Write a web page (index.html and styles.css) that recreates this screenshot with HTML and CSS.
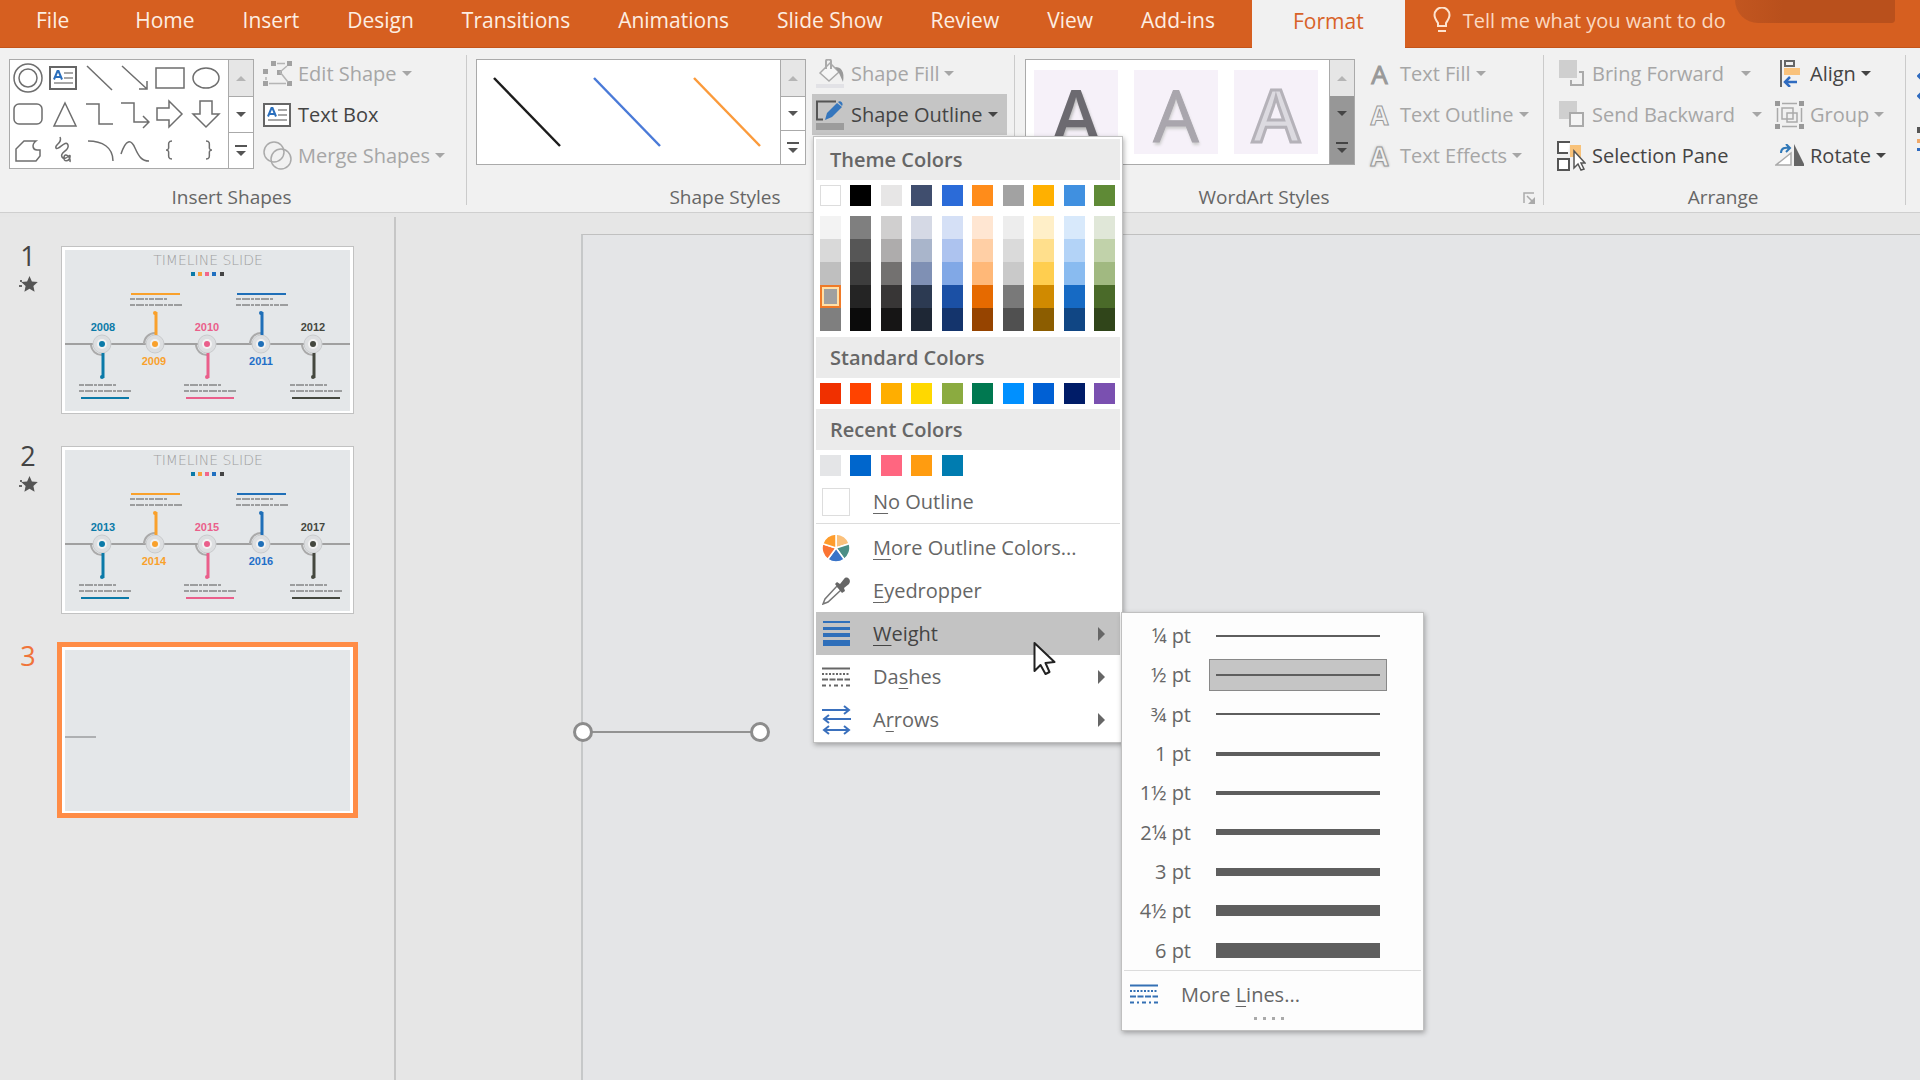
FILE: index.html
```html
<!DOCTYPE html>
<html lang="en">
<head>
<meta charset="utf-8">
<meta name="viewport" content="width=device-width, initial-scale=1">
<title>Timeline Slide</title>
<link rel="stylesheet" href="styles.css">
</head>
<body>
<svg class="defs" aria-hidden="true">
  <defs>
    <symbol id="textbox" viewBox="0 0 28 24">
      <rect x="1" y="1" width="26" height="22" fill="#fff" stroke="#666" stroke-width="2"/>
      <path d="M5 13.500L8.500 5h1L13 13.500M6.500 11h5" fill="none" stroke="#2a6fbd" stroke-width="2"/>
      <path d="M15 7h9M15 12h9M5 17h19" stroke="#8a8a8a" stroke-width="1.500"/>
    </symbol>
    <symbol id="dashes" viewBox="0 0 28 20">
      <g stroke="currentColor" fill="none">
        <path d="M0 1.500h28" stroke-width="2"/>
        <path d="M0 7h28" stroke-width="2" stroke-dasharray="2 1.500"/>
        <path d="M0 12.500h28" stroke-width="2" stroke-dasharray="6 1.500"/>
        <path d="M0 18.500h28" stroke-width="2" stroke-dasharray="4 3 2 3"/>
      </g>
    </symbol>
    <symbol id="star" viewBox="0 0 19 17">
      <path d="M10.500 0l2.400 5.400 5.900.600-4.400 4 1.200 5.800-5.100-3-5.100 3 1.200-5.800-4.400-4 5.900-.600z" fill="#555"/>
      <path d="M1 4h2v2H1zM0 9h3v2H0z" fill="#666"/>
    </symbol>
    <symbol id="node-down" viewBox="0 0 40 60" overflow="visible">
      <circle r="9" fill="#dcdee0" stroke="#c9cbcd"/>
      <path d="M-11 1A11 11 0 0 0 0 11" fill="none" stroke="#aaa" stroke-width="2"/>
      <circle r="5" fill="#f2f2f2"/><circle r="3" fill="currentColor"/>
      <path d="M1 9V34" stroke="currentColor" stroke-width="3"/><circle cx="0" cy="33" r="2" fill="currentColor"/>
      <path d="M-23 41h38M-23 47h52" stroke="#555" stroke-dasharray="5 1 8 1 3 1"/>
      <path d="M-21 54h48" stroke="currentColor" stroke-width="2"/>
    </symbol>
    <symbol id="node-up" viewBox="0 0 40 60" overflow="visible">
      <circle r="9" fill="#dcdee0" stroke="#c9cbcd"/>
      <path d="M-11 0A11 11 0 0 1 0 -11" fill="none" stroke="#aaa" stroke-width="2"/>
      <circle r="5" fill="#f2f2f2"/><circle r="3" fill="currentColor"/>
      <path d="M1 -9V-32" stroke="currentColor" stroke-width="3"/><circle cx="0" cy="-31" r="2" fill="currentColor"/>
      <path d="M-25 -45h38M-25 -39h52" stroke="#555" stroke-dasharray="5 1 8 1 3 1"/>
      <path d="M-24 -50h49" stroke="currentColor" stroke-width="2"/>
    </symbol>
    <symbol id="timeline" viewBox="0 0 285 161">
      <text class="thumb-title" x="143" y="15">TIMELINE SLIDE</text>
      <g>
        <path d="M126 22h4v4h-4z" fill="#0b7aa8"/><path d="M133 22h4v4h-4z" fill="#f9a03a"/><path d="M140 22h4v4h-4z" fill="#f2668b"/><path d="M147 22h4v4h-4z" fill="#1f6fc0"/><path d="M155 22h4v4h-4z" fill="#444"/>
      </g>
      <path d="M0 94h285" stroke="#a0a0a0" stroke-width="2"/>
      <use href="#node-down" x="37" y="94" width="40" height="60" color="#0b7aa8"/>
      <use href="#node-up" x="90" y="94" width="40" height="60" color="#f9a12c"/>
      <use href="#node-down" x="142" y="94" width="40" height="60" color="#ea5f8b"/>
      <use href="#node-up" x="196" y="94" width="40" height="60" color="#1f6fb8"/>
      <use href="#node-down" x="248" y="94" width="40" height="60" color="#45483f"/>
    </symbol>
  </defs>
</svg>

<div class="app">
  <nav class="tabs" aria-label="Ribbon tabs">
    <button class="tab tab-file">File</button>
    <button class="tab">Home</button>
    <button class="tab">Insert</button>
    <button class="tab">Design</button>
    <button class="tab">Transitions</button>
    <button class="tab">Animations</button>
    <button class="tab">Slide Show</button>
    <button class="tab">Review</button>
    <button class="tab">View</button>
    <button class="tab">Add-ins</button>
    <button class="tab tab-active">Format</button>
    <button class="tell">
      <svg width="18" height="26" viewBox="0 0 18 26" fill="none" stroke="#fde3cf" stroke-width="2"><path d="M5 19v-3C3 13 1.500 11 1.500 8a7.500 7.500 0 0 1 15 0c0 3-1.500 5-3.500 8v3zM5 24h8"/></svg>
      Tell me what you want to do
    </button>
    <span class="tabs-art"></span>
  </nav>

  <section class="ribbon" aria-label="Format">
    <div class="group g-insert">
      <div class="group-body">
        <div class="gallery gallery-shapes">
          <div class="shape-grid">
            <button aria-label="Donut"><svg viewBox="0 0 30 30"><circle cx="15" cy="15" r="14"/><circle cx="15" cy="15" r="9"/></svg></button>
            <button aria-label="Text box"><svg viewBox="0 0 30 30"><use href="#textbox" x="1" y="3" width="28" height="24"/></svg></button>
            <button aria-label="Line"><svg viewBox="0 0 30 30"><path d="M3 3l25 24"/></svg></button>
            <button aria-label="Arrow"><svg viewBox="0 0 30 30"><path d="M2 3l25 23M27 18v8h-8"/></svg></button>
            <button aria-label="Rectangle"><svg viewBox="0 0 30 30"><path d="M1 5h28v20H1z"/></svg></button>
            <button aria-label="Ellipse"><svg viewBox="0 0 30 30"><ellipse cx="15" cy="15" rx="13" ry="10"/></svg></button>
            <button aria-label="Rounded rectangle"><svg viewBox="0 0 30 30"><rect x="1" y="5" width="28" height="20" rx="5"/></svg></button>
            <button aria-label="Triangle"><svg viewBox="0 0 30 30"><path d="M17 4L28 27H6z"/></svg></button>
            <button aria-label="Elbow"><svg viewBox="0 0 30 30"><path d="M2 5h13v20h14"/></svg></button>
            <button aria-label="Elbow arrow"><svg viewBox="0 0 30 30"><path d="M1 4h13v19h14M23 17l6 6-6 6"/></svg></button>
            <button aria-label="Right arrow"><svg viewBox="0 0 30 30"><path d="M2 9h12V2l13 13-13 13v-7H2z"/></svg></button>
            <button aria-label="Down arrow"><svg viewBox="0 0 30 30"><path d="M9 2h12v13h7L15 28 2 15h7z"/></svg></button>
            <button aria-label="Freeform"><svg viewBox="0 0 30 30"><path d="M3 26V14l8-8h12c-5 4-3 9 1 9h3v6l-4 5z"/></svg></button>
            <button aria-label="Scribble"><svg viewBox="0 0 30 30"><path d="M12 2c3 6-6 8-4 11s10-9 12-3-9 7-6 12 9-5 8 0-7 5-6 0 7 0 6 5"/></svg></button>
            <button aria-label="Arc"><svg viewBox="0 0 30 30"><path d="M4 6c14 0 25 6 25 20"/></svg></button>
            <button aria-label="Curve"><svg viewBox="0 0 30 30"><path d="M1 19C6 4 11 4 15 13s7 13 14 13"/></svg></button>
            <button aria-label="Left brace"><svg viewBox="0 0 30 30"><path d="M17 6c-7 0 0 9-6 9 6 0-1 9 6 9"/></svg></button>
            <button aria-label="Right brace"><svg viewBox="0 0 30 30"><path d="M15 6c7 0 0 9 6 9-6 0 1 9-6 9"/></svg></button>
          </div>
          <div class="scroller">
            <button class="off" aria-label="Previous"><i class="up"></i></button>
            <button aria-label="Next"><i class="down"></i></button>
            <button aria-label="More"><i class="more"></i></button>
          </div>
        </div>
        <div class="stack">
          <button class="cmd off"><svg class="ico" viewBox="0 0 29 26"><g fill="#a2a2a2"><path d="M8 0h5v5H8zM24 0h5v5h-5zM0 8h5v5H0zM14 9h5v5h-5zM0 20h5v5H0zM24 20h5v5h-5z"/></g><path d="M14 2.500h8M3 16v3M6 22.500h17M24 5l-7 6 8 10" stroke="#b5b5b5" stroke-width="1.500" fill="none"/></svg>Edit Shape<i class="down"></i></button>
          <button class="cmd"><svg class="ico" viewBox="0 0 29 24"><use href="#textbox" x="0" y="0" width="28" height="24"/></svg>Text Box</button>
          <button class="cmd off"><svg class="ico" viewBox="0 0 29 29" fill="none" stroke="#aaa" stroke-width="1.500"><circle cx="11" cy="11" r="10"/><circle cx="18" cy="18" r="10"/></svg>Merge Shapes<i class="down"></i></button>
        </div>
      </div>
      <h2 class="group-label">Insert Shapes</h2>
    </div>
    <div class="sep"></div>

    <div class="group g-styles">
      <div class="group-body">
        <div class="gallery">
          <div class="tiles">
            <button aria-label="Black line"><svg width="84" height="84" viewBox="0 0 84 84"><path d="M9 8l66 68" stroke="#1c1c1c" stroke-width="2.500"/></svg></button>
            <button aria-label="Blue line"><svg width="84" height="84" viewBox="0 0 84 84"><path d="M9 8l66 68" stroke="#4a7ad8" stroke-width="2.500"/></svg></button>
            <button aria-label="Orange line"><svg width="84" height="84" viewBox="0 0 84 84"><path d="M9 8l66 68" stroke="#fb9a3a" stroke-width="2.500"/></svg></button>
          </div>
          <div class="scroller">
            <button class="off" aria-label="Previous"><i class="up"></i></button>
            <button aria-label="Next"><i class="down"></i></button>
            <button aria-label="More"><i class="more"></i></button>
          </div>
        </div>
        <div class="stack">
          <button class="cmd off"><svg class="ico" viewBox="0 0 29 29"><path d="M0 25h28v4H0z" fill="#e2e2e6"/><path d="M4 14L14 4l9 9-10 9z" fill="#f6f6f6" stroke="#aaa" stroke-width="1.500"/><path d="M10 10V2c0-2 5-2 5 0v8" fill="none" stroke="#aaa" stroke-width="2"/><path d="M19 8c6 0 10 4 8 15l-4-9z" fill="#9a9a9a"/></svg>Shape Fill<i class="down"></i></button>
          <div class="menu-anchor">
            <button class="cmd open" aria-expanded="true"><svg class="ico" viewBox="0 0 29 30"><path d="M0 23h28v7H0z" fill="#9c9c9c"/><path d="M7 19.500H1V1.500h19" fill="none" stroke="#555" stroke-width="2"/><path d="M9 20l2-7L21 3l5 4-10 10z" fill="#3576bd"/><path d="M22 2c2-2 6 1 4 4z" fill="#3576bd"/></svg>Shape Outline<i class="down"></i></button>

            <div class="menu" role="menu">
              <h3 class="menu-head">Theme Colors</h3>
              <div class="swatches">
                <button class="sw lined" style="background:#ffffff" aria-label="White"></button>
                <button class="sw" style="background:#000000" aria-label="Black"></button>
                <button class="sw" style="background:#e7e6e6" aria-label="Light gray"></button>
                <button class="sw" style="background:#404e6e" aria-label="Blue gray"></button>
                <button class="sw" style="background:#2b6bd8" aria-label="Blue"></button>
                <button class="sw" style="background:#ff8c1a" aria-label="Orange"></button>
                <button class="sw" style="background:#a2a2a2" aria-label="Gray"></button>
                <button class="sw" style="background:#ffb000" aria-label="Gold"></button>
                <button class="sw" style="background:#4090e0" aria-label="Sky blue"></button>
                <button class="sw" style="background:#5f8a36" aria-label="Green"></button>
              </div>
              <div class="tints">
                <div class="tint"><button style="background:#f3f3f3"></button><button style="background:#d9d9d9"></button><button style="background:#bfbfbf"></button><button class="chosen" style="background:#a0a0a0" aria-label="White, darker 35%"></button><button style="background:#7f7f7f"></button></div>
                <div class="tint"><button style="background:#7f7f7f"></button><button style="background:#565656"></button><button style="background:#3d3d3d"></button><button style="background:#242424"></button><button style="background:#0b0b0b"></button></div>
                <div class="tint"><button style="background:#d0cfcf"></button><button style="background:#aeacac"></button><button style="background:#737170"></button><button style="background:#383636"></button><button style="background:#161515"></button></div>
                <div class="tint"><button style="background:#d5d9e5"></button><button style="background:#a9b5cb"></button><button style="background:#7f90b4"></button><button style="background:#2c3a52"></button><button style="background:#1e2735"></button></div>
                <div class="tint"><button style="background:#d5e0f6"></button><button style="background:#adc3ef"></button><button style="background:#81a8e6"></button><button style="background:#1b50a5"></button><button style="background:#14346c"></button></div>
                <div class="tint"><button style="background:#ffe6d2"></button><button style="background:#ffcfa5"></button><button style="background:#ffb878"></button><button style="background:#e66a00"></button><button style="background:#964400"></button></div>
                <div class="tint"><button style="background:#ededed"></button><button style="background:#dadada"></button><button style="background:#c9c9c9"></button><button style="background:#797979"></button><button style="background:#505050"></button></div>
                <div class="tint"><button style="background:#ffefc8"></button><button style="background:#ffdf8c"></button><button style="background:#ffce4f"></button><button style="background:#d08a00"></button><button style="background:#8c5d00"></button></div>
                <div class="tint"><button style="background:#d8e9fb"></button><button style="background:#b3d3f7"></button><button style="background:#89bbf0"></button><button style="background:#166ac4"></button><button style="background:#104684"></button></div>
                <div class="tint"><button style="background:#e0e7d8"></button><button style="background:#c1d2aa"></button><button style="background:#a1b981"></button><button style="background:#4a6a29"></button><button style="background:#30451a"></button></div>
              </div>
              <h3 class="menu-head">Standard Colors</h3>
              <div class="swatches">
                <button class="sw" style="background:#f03000" aria-label="Dark red"></button>
                <button class="sw" style="background:#ff4300" aria-label="Red"></button>
                <button class="sw" style="background:#ffae00" aria-label="Orange"></button>
                <button class="sw" style="background:#ffd800" aria-label="Yellow"></button>
                <button class="sw" style="background:#8bab40" aria-label="Light green"></button>
                <button class="sw" style="background:#007850" aria-label="Green"></button>
                <button class="sw" style="background:#0090ff" aria-label="Light blue"></button>
                <button class="sw" style="background:#0060d4" aria-label="Blue"></button>
                <button class="sw" style="background:#001c68" aria-label="Dark blue"></button>
                <button class="sw" style="background:#7a50b0" aria-label="Purple"></button>
              </div>
              <h3 class="menu-head">Recent Colors</h3>
              <div class="swatches">
                <button class="sw" style="background:#e4e5e7" aria-label="Recent gray"></button>
                <button class="sw" style="background:#0066cc" aria-label="Recent blue"></button>
                <button class="sw" style="background:#ff6680" aria-label="Recent pink"></button>
                <button class="sw" style="background:#ff9c10" aria-label="Recent orange"></button>
                <button class="sw" style="background:#007cb0" aria-label="Recent teal"></button>
                <span class="sw"></span><span class="sw"></span><span class="sw"></span><span class="sw"></span><span class="sw"></span>
              </div>
              <button class="item item-short" role="menuitem"><span class="mico"><span class="nobox"></span></span><span><u>N</u>o Outline</span></button>
              <hr class="rule">
              <button class="item" role="menuitem"><span class="mico"><svg width="28" height="28" viewBox="-14 -14 28 28" stroke="#fff" stroke-width="1.500"><path d="M0 0V-14A14 14 0 0 1 13.300 -4.300z" fill="#fbc17c"/><path d="M0 0L13.300 -4.300A14 14 0 0 1 8.200 11.300z" fill="#4c8f86"/><path d="M0 0L8.200 11.300A14 14 0 0 1 -8.200 11.300z" fill="#3a74c8"/><path d="M0 0L-8.200 11.300A14 14 0 0 1 -13.300 -4.300z" fill="#fb7433"/><path d="M0 0L-13.300 -4.300A14 14 0 0 1 0 -14z" fill="#fe9c2c"/></svg></span><span><u>M</u>ore Outline Colors...</span></button>
              <button class="item" role="menuitem"><span class="mico"><svg width="28" height="28" viewBox="0 0 28 28"><path d="M15 9l4 4L6 25l-5 2 2-5z" fill="#fff" stroke="#777" stroke-width="1.500"/><path d="M13 7l2-2 3 2 4-5c3-4 8 1 5 5l-5 4 1 3-3 2z" fill="#666"/></svg></span><span><u>E</u>yedropper</span></button>
              <div class="menu-anchor">
                <button class="item hot" role="menuitem" aria-expanded="true"><span class="mico"><svg width="27" height="25" viewBox="0 0 27 25" fill="#2f6fba"><path d="M0 0h27v2H0zM0 6h27v3H0zM0 12h27v4H0zM0 19h27v6H0z"/></svg></span><span><u>W</u>eight</span><i class="right"></i></button>

                <div class="submenu" role="menu">
                  <div class="weights">
                    <button class="weight" role="menuitem"><span class="pt">¼ pt</span><span class="line"><span class="w2"></span></span></button>
                    <button class="weight on" role="menuitem"><span class="pt">½ pt</span><span class="line"><span class="w2"></span></span></button>
                    <button class="weight" role="menuitem"><span class="pt">¾ pt</span><span class="line"><span class="w2"></span></span></button>
                    <button class="weight" role="menuitem"><span class="pt">1 pt</span><span class="line"><span class="w4"></span></span></button>
                    <button class="weight" role="menuitem"><span class="pt">1½ pt</span><span class="line"><span class="w4"></span></span></button>
                    <button class="weight" role="menuitem"><span class="pt">2¼ pt</span><span class="line"><span class="w6"></span></span></button>
                    <button class="weight" role="menuitem"><span class="pt">3 pt</span><span class="line"><span class="w8"></span></span></button>
                    <button class="weight" role="menuitem"><span class="pt">4½ pt</span><span class="line"><span class="w11"></span></span></button>
                    <button class="weight" role="menuitem"><span class="pt">6 pt</span><span class="line"><span class="w15"></span></span></button>
                  </div>
                  <hr class="rule">
                  <button class="item more-lines" role="menuitem"><span class="mico blue"><svg width="28" height="20"><use href="#dashes"/></svg></span><span>More <u>L</u>ines...</span></button>
                  <div class="grip"><i></i><i></i><i></i><i></i></div>
                </div>

                <svg class="cursor" width="24" height="36" viewBox="0 0 24 36"><path d="M1.500 2v28l6-6 5 9 4-2-4-9 9-1z" fill="#fff" stroke="#222" stroke-width="2" stroke-linejoin="round"/></svg>
              </div>
              <button class="item" role="menuitem"><span class="mico"><svg width="28" height="20"><use href="#dashes"/></svg></span><span>Da<u>s</u>hes</span><i class="right"></i></button>
              <button class="item" role="menuitem"><span class="mico"><svg width="29" height="30" viewBox="0 0 29 30" fill="none" stroke="#3a70bd" stroke-width="2"><path d="M0 5h27M22 1l5 4-5 4M29 14H2M7 10l-5 4 5 4M2 25h25M7 21l-5 4 5 4M22 21l5 4-5 4"/></svg></span><span>A<u>r</u>rows</span><i class="right"></i></button>
            </div>
          </div>
        </div>
      </div>
      <h2 class="group-label with-launcher">Shape Styles</h2>
    </div>
    <div class="sep"></div>

    <div class="group g-wordart">
      <div class="group-body">
        <div class="gallery">
          <div class="tiles tinted">
            <button class="wa wa-dark">A</button>
            <button class="wa wa-mid">A</button>
            <button class="wa wa-out">A</button>
          </div>
          <div class="scroller dark">
            <button class="off" aria-label="Previous"><i class="up"></i></button>
            <button aria-label="Next"><i class="down"></i></button>
            <button aria-label="More"><i class="more"></i></button>
          </div>
        </div>
        <div class="stack">
          <button class="cmd off"><span class="ico letter">A</span>Text Fill<i class="down"></i></button>
          <button class="cmd off"><span class="ico letter hollow">A</span>Text Outline<i class="down"></i></button>
          <button class="cmd off"><span class="ico letter hollow glow">A</span>Text Effects<i class="down"></i></button>
        </div>
      </div>
      <h2 class="group-label with-launcher">WordArt Styles</h2>
      <button class="launcher" aria-label="WordArt options"><svg width="12" height="12" viewBox="0 0 12 12"><path d="M1 11V1h10M4 4l6 6" fill="none" stroke="#aaa" stroke-width="1.500"/><path d="M12 5v7H5z" fill="#aaa"/></svg></button>
    </div>
    <div class="sep"></div>

    <div class="group g-arrange">
      <div class="group-body">
        <div class="stack first">
          <button class="cmd off split"><svg class="ico" viewBox="0 0 29 27"><path d="M2 0h18v18H2z" fill="#cfcfcf"/><path d="M22 12h4v13H14v-5" fill="none" stroke="#aaa" stroke-width="2"/></svg>Bring Forward<i class="down"></i></button>
          <button class="cmd off split"><svg class="ico" viewBox="0 0 29 27"><path d="M2 0h18v18H2z" fill="#cfcfcf"/><path d="M13 12h13v13H13z" fill="#f4f4f4" stroke="#aaa" stroke-width="2"/></svg>Send Backward<i class="down"></i></button>
          <button class="cmd"><svg class="ico" viewBox="0 0 29 30"><path d="M13 4h11v12H13z" fill="#f8c27a"/><path d="M13 1H1v11h10M1 18h11v11H1z" fill="#fff" stroke="#555" stroke-width="2"/><path d="M17 10v17l4-4 3 6 3-1-3-6h4z" fill="#fff" stroke="#555" stroke-width="1.500"/></svg>Selection Pane</button>
        </div>
        <div class="stack">
          <button class="cmd"><svg class="ico" viewBox="0 0 29 27"><path d="M6 0v27" stroke="#666" stroke-width="2"/><path d="M10 1h9v5h-9z" fill="none" stroke="#666" stroke-width="2"/><path d="M9 8h16v7H9z" fill="#f9c27c"/><path d="M22 22H11M15 17l-5 5 5 5" fill="none" stroke="#2f6bc0" stroke-width="2.500"/></svg>Align<i class="down"></i></button>
          <button class="cmd off"><svg class="ico" viewBox="0 0 29 28"><path d="M0 0h5v5H0zM24 0h5v5h-5zM0 23h5v5H0zM24 23h5v5h-5z" fill="#999"/><path d="M7 2.500h15M7 25.500h15M2.500 7v14M26.500 7v14M7 7h11v11H7zM12 12h10v9H12z" fill="none" stroke="#aaa" stroke-width="1.500"/></svg>Group<i class="down"></i></button>
          <button class="cmd"><svg class="ico" viewBox="0 0 29 23"><path d="M16 9v12H1z" fill="#fff" stroke="#aaa" stroke-width="1.500"/><path d="M19 0v22h11z" fill="#666"/><path d="M6 9c0-5 4-6 8-5M11 0l4 4-4 4" fill="none" stroke="#2f78b8" stroke-width="2"/></svg>Rotate<i class="down"></i></button>
        </div>
      </div>
      <h2 class="group-label">Arrange</h2>
    </div>
    <div class="sep"></div>
    <div class="group g-size">
      <svg width="3" height="80" viewBox="0 0 3 80"><path d="M1 3l2-2v4zM1 23l2-2v4z" stroke="#2f6bc0" stroke-width="2"/><path d="M0 54h3v6H0z" fill="#555"/><path d="M0 66h3v4H0z" fill="#f0a868"/><path d="M0 75h3v3H0z" fill="#2f6bc0"/></svg>
    </div>
  </section>

  <main class="work">
    <aside class="slides" aria-label="Slides">
      <div class="slide-row">
        <div class="num">1<svg width="19" height="17"><use href="#star"/></svg></div>
        <button class="thumb" aria-label="Slide 1"><svg viewBox="0 0 285 161"><use href="#timeline" width="285" height="161"/>
          <g class="years"><text x="38" y="81" fill="#0b7aa8">2008</text><text x="89" y="115" fill="#f9a12c">2009</text><text x="142" y="81" fill="#ea5f8b">2010</text><text x="196" y="115" fill="#1f6fc8">2011</text><text x="248" y="81" fill="#45483f">2012</text></g></svg></button>
      </div>
      <div class="slide-row">
        <div class="num">2<svg width="19" height="17"><use href="#star"/></svg></div>
        <button class="thumb" aria-label="Slide 2"><svg viewBox="0 0 285 161"><use href="#timeline" width="285" height="161"/>
          <g class="years"><text x="38" y="81" fill="#0b7aa8">2013</text><text x="89" y="115" fill="#f9a12c">2014</text><text x="142" y="81" fill="#ea5f8b">2015</text><text x="196" y="115" fill="#1f6fc8">2016</text><text x="248" y="81" fill="#45483f">2017</text></g></svg></button>
      </div>
      <div class="slide-row current">
        <div class="num">3</div>
        <button class="thumb" aria-label="Slide 3"><svg viewBox="0 0 285 161"><path d="M0 87h31" stroke="#aeb0b2" stroke-width="2"/></svg></button>
      </div>
    </aside>
    <div class="stage">
      <div class="slide">
        <svg class="shape" width="200" height="22" viewBox="0 0 200 22"><path d="M11 11h177" stroke="#929292" stroke-width="2"/><g fill="#fff" stroke="#8c8c8c" stroke-width="3"><circle cx="11" cy="11" r="8.500"/><circle cx="188" cy="11" r="8.500"/></g></svg>
      </div>
    </div>
  </main>
</div>
</body>
</html>
```
FILE: styles.css
```css
* { box-sizing: border-box; }

body {
  margin: 0;
  font-family: "Open Sans", "Noto Sans", sans-serif;
  font-size: 20px;
  color: #444;
  background: #e6e6e6;
}

button {
  margin: 0;
  padding: 0;
  border: 0;
  background: none;
  font: inherit;
  color: inherit;
  white-space: nowrap;
}

h2, h3 { margin: 0; }

.defs { position: absolute; width: 0; height: 0; }

.app {
  display: flex;
  flex-direction: column;
  height: 100vh;
  overflow: hidden;
}

/* Tab strip */
.tabs {
  display: flex;
  height: 48px;
  background: #d65f20;
  border-bottom: 1px solid #c4541a;
  color: #fdeee2;
}

.tab {
  padding: 0 24px 7px;
  font-size: 21px;
}

.tab-file { padding: 0 42px 7px 36px; }

.tab-active {
  height: 48px;
  margin-left: 13px;
  padding: 0 41px 7px;
  background: #f1f1f1;
  color: #d86228;
}

.tell {
  display: flex;
  align-items: center;
  gap: 12px;
  padding: 0 0 7px 28px;
  color: #fbd9c2;
}

.tabs-art {
  width: 160px;
  height: 23px;
  margin-left: auto;
  margin-right: 25px;
  background: linear-gradient(90deg, #c25620, #b9501c 30%);
  border-radius: 0 0 6px 40px;
}

/* Ribbon */
.ribbon {
  display: flex;
  flex: none;
  height: 165px;
  padding-top: 5px;
  background: #f1f1f1;
  border-bottom: 1px solid #cfcfcf;
}

.group {
  position: relative;
  display: flex;
  flex: none;
  flex-direction: column;
  padding-left: 9px;
}

.g-insert { width: 466px; }
.g-styles { width: 547px; }
.g-wordart { width: 528px; padding-left: 10px; }
.g-arrange { width: 361px; }
.g-size { flex: 1; padding: 20px 0 0 11px; }

.sep {
  flex: none;
  width: 1px;
  margin: 2px 0 7px;
  background: #cbcbcb;
}

.group-body { display: flex; height: 123px; }

.group-label {
  margin: 7px 12px 0 0;
  font-size: 19px;
  font-weight: 400;
  line-height: 28px;
  text-align: center;
  color: #666;
}

.with-launcher { margin-right: 40px; }

.launcher {
  position: absolute;
  right: 8px;
  bottom: 8px;
  height: 12px;
  line-height: 0;
}

.stack { display: flex; flex-direction: column; align-items: flex-start; }
.stack.first { width: 218px; }

.cmd {
  display: flex;
  align-items: center;
  height: 41px;
  padding: 0 9px 0 4px;
}

.cmd.off { color: #a6a6a6; }
.cmd.open { background: #c5c5c5; }

.ico { flex: none; width: 29px; max-height: 30px; margin-right: 6px; }

.letter {
  font-size: 26px;
  line-height: 30px;
  text-align: center;
  color: #999;
  -webkit-text-stroke: 1px #999;
}

.hollow { color: #f1f1f1; font-weight: 700; }
.glow { text-shadow: 0 0 3px #888; }

i.up, i.down, i.more, i.right { display: block; flex: none; width: 0; height: 0; }
i.down, i.up { border: 5px solid transparent; }
i.down { border-top-color: currentColor; border-bottom: 0; }
i.up { border-bottom-color: currentColor; border-top: 0; }
i.right { border: 7px solid transparent; border-left-color: #666; border-right: 0; }
.cmd i.down { margin-left: 5px; }
.cmd.split i.down { margin-left: 17px; }
i.more {
  position: relative;
  width: 12px;
  height: 11px;
  border-top: 2px solid currentColor;
}
i.more::after {
  content: "";
  position: absolute;
  left: 1px;
  top: 4px;
  border: 5px solid transparent;
  border-top-color: currentColor;
  border-bottom: 0;
}

/* Galleries */
.gallery {
  display: flex;
  width: 330px;
  height: 106px;
  margin: 6px 6px 0 0;
  border: 1px solid #aaa;
  background: #fff;
}

.gallery-shapes { width: 245px; height: 110px; margin-right: 5px; }

.shape-grid {
  display: grid;
  grid-template-columns: repeat(6, 1fr);
  grid-template-rows: repeat(3, 1fr);
  flex: 1;
  place-items: center;
  padding-right: 4px;
}

.shape-grid button { height: 30px; }
.shape-grid svg {
  display: block;
  width: 30px;
  height: 30px;
  fill: none;
  stroke: #6e6e6e;
  stroke-width: 1.5;
}

.tiles {
  display: flex;
  flex: 1;
  align-items: center;
  gap: 16px;
  padding-left: 8px;
}
.tiles button { width: 84px; height: 84px; line-height: 0; }
.tinted button { background: #f6f1f9; }

.tiles .wa { font-size: 72px; line-height: 88px; }
.wa-dark { color: #6c6a70; font-weight: 600; text-shadow: 1px 3px 3px #bbb; }
.wa-mid { color: #a9a6ad; -webkit-text-stroke: 1px #a9a6ad; text-shadow: 1px 3px 3px #ccc; }
.wa-out { color: #dcdae0; font-weight: 600; -webkit-text-stroke: 3px #b5b2b9; }

.scroller {
  display: grid;
  grid-template-rows: 36px 1fr 1fr;
  width: 25px;
  border-left: 1px solid #aaa;
}
.scroller button {
  display: flex;
  align-items: center;
  justify-content: center;
  color: #555;
}
.scroller button + button { border-top: 1px solid #aaa; }
.scroller .off { background: #e6e6e6; color: #b5b5b5; }
.dark button:not(.off) { background: #979797; border-color: #979797; color: #444; }

/* Drop-down */
.menu-anchor { position: relative; }

.menu {
  position: absolute;
  z-index: 5;
  left: 1px;
  top: 42px;
  width: 310px;
  padding: 2px 2px 1px;
  background: #fff;
  border: 1px solid #c0c0c0;
  box-shadow: 1px 2px 5px rgba(0, 0, 0, .3);
  color: #666;
}

.menu-head {
  height: 41px;
  padding-left: 14px;
  font-size: 20px;
  font-weight: 600;
  line-height: 41px;
  background: #ebebeb;
}

.swatches, .tints {
  display: flex;
  justify-content: space-between;
  padding: 5px 5px 5px 4px;
}
.sw { width: 21px; height: 21px; }
.lined { border: 1px solid #ddd; }
.tints { padding-bottom: 6px; }
.tint { display: flex; flex-direction: column; width: 21px; }
.tint button { height: 23px; }
.tint .chosen {
  border: 2px solid #ef7a28;
  box-shadow: inset 0 0 0 2px #ffe0a8;
}

.item {
  display: flex;
  align-items: center;
  width: 100%;
  height: 43px;
  padding-right: 15px;
  text-align: left;
}
.item-short { height: 41px; }
.item-short + .rule { margin: 1px 0 2px; }
.item i.right { margin-left: auto; }
.item u { text-underline-offset: 4px; text-decoration-thickness: 1px; }
.item.hot { background: #c3c3c3; color: #444; }
.mico {
  display: flex;
  flex: none;
  align-items: center;
  justify-content: center;
  width: 43px;
  margin-right: 14px;
  padding-right: 3px;
}
.nobox { width: 28px; height: 28px; border: 1px solid #ddd; }
.blue { color: #3470b4; }
.rule { height: 1px; margin: 0; border: 0; background: #dcdcdc; }

.submenu {
  position: absolute;
  z-index: 6;
  left: 305px;
  top: 0;
  width: 303px;
  padding: 3px 2px 0;
  background: #fdfdfd;
  border: 1px solid #c0c0c0;
  box-shadow: 1px 2px 5px rgba(0, 0, 0, .3);
}

.weights {
  display: grid;
  grid-auto-rows: 1fr;
  height: 354px;
}

.weight {
  display: grid;
  grid-template-columns: 67px 178px;
  column-gap: 18px;
  align-items: center;
  width: 100%;
}
.pt { text-align: right; }
.line {
  display: flex;
  align-items: center;
  height: 32px;
  padding: 0 6px;
  border: 1px solid transparent;
}
.on .line { background: #c5c5c5; border-color: #888; }
.line span { flex: 1; background: #5e5e5e; }
.w2 { height: 2px; }
.w4 { height: 4px; }
.w6 { height: 6px; }
.w8 { height: 8px; }
.w11 { height: 11px; }
.w15 { height: 15px; }

.more-lines { height: 46px; }
.grip { display: flex; justify-content: center; gap: 6px; height: 13px; padding-right: 8px; }
.grip i { width: 3px; height: 3px; background: #aaa; }

.cursor { position: absolute; z-index: 7; left: 217px; top: 29px; }

/* Work area */
.work {
  display: grid;
  grid-template-columns: 394px 1fr;
  flex: 1;
  min-height: 0;
  padding-top: 4px;
}

.slides {
  display: flex;
  flex-direction: column;
  gap: 32px;
  padding-top: 29px;
  background: #e7e7e7;
}

.slide-row { display: flex; align-items: flex-start; }

.num {
  display: flex;
  flex-direction: column;
  align-items: center;
  gap: 10px;
  width: 61px;
  padding: 0 5px 0 0;
  font-size: 27px;
  line-height: 20px;
}

.thumb {
  width: 293px;
  height: 168px;
  padding: 3px;
  background: #fff;
  border: 1px solid #c2c2c2;
}
.thumb svg { display: block; width: 100%; background: #e4e7e9; }

.current .num { color: #f0743a; }
.current .thumb { outline: 5px solid #ff8c46; outline-offset: -1px; border-color: #ff8c46; }

.thumb-title { font: 14px "DejaVu Sans", sans-serif; font-weight: 200; text-anchor: middle; fill: #a0a0a0; }
.years { font: 700 11px "Liberation Sans", sans-serif; text-anchor: middle; }

.stage {
  display: flex;
  padding: 17px 0 0 185px;
  border-left: 2px solid #c6c6c6;
}

.slide {
  position: relative;
  flex: 1;
  background: #e4e5e7;
  border-left: 2px solid #c6c8c9;
  border-top: 1px solid #c0c0c0;
}

.shape { position: absolute; left: -11px; top: 486px; }
```
